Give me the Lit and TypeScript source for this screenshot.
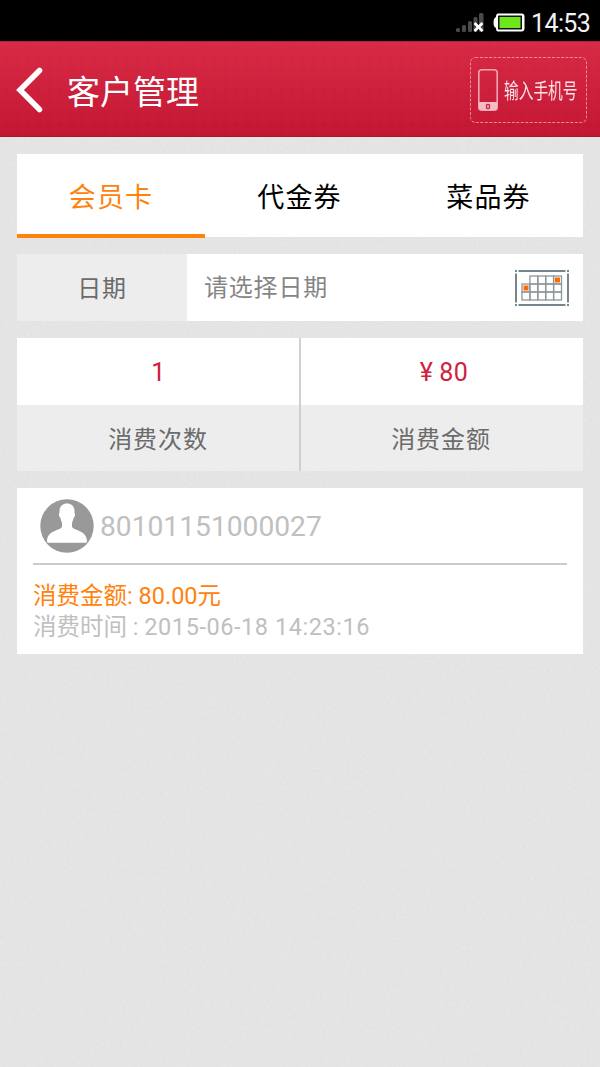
import { LitElement, html, css, svg } from "lit";
import { customElement, state } from "lit/decorators.js";
import { classMap } from "lit/directives/class-map.js";

@customElement("status-bar")
class StatusBar extends LitElement {
  static styles = css`
    :host { display: flex; height: 41px; background: #000; justify-content: flex-end; align-items: center; padding-right: 9px; box-sizing: border-box; }
    .signal { margin-right: 9px; }
    .battery { margin-right: 6px; }
    .time { font: 25px/41px Roboto, sans-serif; color: #f2f2f2; width: 60px; white-space: nowrap; letter-spacing: -0.6px; padding-top: 5px; }
    svg { display: block; margin-top: 4px; }
  `;
  render() {
    return html`
      <svg class="signal" width="28" height="21" viewBox="0 0 28 21">
        <g fill="#4a4a4a">
          <rect x="0" y="16" width="4" height="4" rx="1.5"/><rect x="6" y="13" width="4" height="7" rx="1.5"/>
          <rect x="12" y="9" width="4" height="11" rx="1.5"/><rect x="17.5" y="5" width="4" height="15" rx="1.5"/>
          <rect x="23" y="1" width="4.5" height="19" rx="1.5"/>
        </g>
        <path d="M18.500 11l8 8M26.500 11l-8 8" stroke="#fff" stroke-width="2.600"/>
      </svg>
      <svg class="battery" width="32" height="19" viewBox="0 0 32 19">
        <path d="M5 .5h23.500q3 0 3 3v12q0 3-3 3h-23.500q-2 0-2-3.500q-2.500-1-2.500-5.500t2.500-5.500q0-3.500 2-3.500z" fill="#fff"/>
        <rect x="5" y="2.500" width="24" height="14" rx=".5" fill="#111"/>
        <rect x="6.500" y="4" width="21" height="11" fill="#6ee619"/>
      </svg>
      <span class="time">14:53</span>`;
  }
}

@customElement("title-bar")
class TitleBar extends LitElement {
  static styles = css`
    :host { display: flex; height: 96px; box-sizing: border-box; align-items: center; padding: 1px 13px 0 16px;
      background: radial-gradient(circle at 50% 50%, rgba(110,0,30,.035) 0 2px, transparent 4px) 0 0/11px 11px,
        linear-gradient(#d92b46, #c31733); border-bottom: 1px solid #ae1430; border-top: 1px solid #b3203a; }
    .back { display: block; margin-right: 24px; }
    h1 { font: 33px/48px Roboto, "Noto Sans CJK SC", sans-serif; font-weight: 400; margin: 0; padding-top: 6px; color: #fff; flex: 1; }
    .phone { display: flex; align-items: center; width: 117px; height: 66px; position: relative; box-sizing: border-box; padding-left: 8px; }
    .frame { position: absolute; inset: 0; }
    .device { margin-right: 6px; }
    .label { font: 21px/30px Roboto, "Noto Sans CJK SC", sans-serif; color: #fbe3e7; white-space: nowrap; transform: scaleX(.7); transform-origin: 0 50%; width: 74px; padding-top: 2px; }
  `;
  render() {
    return html`
      <svg class="back" width="27" height="46" viewBox="0 0 27 46"><path d="M23.500 3.500L4 23l19.500 19.500" fill="none" stroke="#fff" stroke-width="5.500" stroke-linecap="round"/></svg>
      <h1>客户管理</h1>
      <div class="phone">
        <svg class="frame" width="117" height="66"><rect x=".5" y=".5" width="116" height="65" rx="5" fill="none" stroke="#ea8b9b" stroke-dasharray="3 1.500"/></svg>
        <svg class="device" width="20" height="42" viewBox="0 0 20 42">
          <rect x=".8" y=".8" width="18.400" height="40.400" rx="3" fill="none" stroke="#efa6b2" stroke-width="1.600"/>
          <path d="M1 33h18v5q0 3-3 3H4q-3 0-3-3z" fill="#f3bcc6"/>
          <rect x="8.500" y="35.500" width="3" height="4" rx="1" fill="none" stroke="#cf2440" stroke-width="1.300"/>
        </svg>
        <span class="label">输入手机号</span>
      </div>`;
  }
}

@customElement("calendar-icon")
class CalendarIcon extends LitElement {
  static styles = css`:host { display: block; } svg { display: block; }`;
  render() {
    const cells = [];
    for (let r = 0; r < 3; r++)
      for (let c = r === 0 ? 1 : 0; c < 5; c++)
        cells.push(svg`<rect x=${7 + c * 7.9} y=${6 + r * 8} width="7.9" height="8"/>`);
    return html`<svg width="54" height="36" viewBox="0 0 54 36">
      <g stroke="#77858d" stroke-width="2"><path d="M3.500 1h47M3.500 35h47M1 3.500v29M53 3.500v29"/></g>
      <g fill="#77858d"><rect width="2" height="2"/><rect x="52" width="2" height="2"/><rect y="34" width="2" height="2"/><rect x="52" y="34" width="2" height="2"/></g>
      <g fill="none" stroke="#8b979e" stroke-width="1.300">${cells}</g>
      <rect x="8.500" y="15.500" width="5" height="5" fill="#ff6a00"/><rect x="40" y="7.500" width="5" height="5" fill="#ff6a00"/>
    </svg>`;
  }
}

@customElement("app-root")
class AppRoot extends LitElement {
  @state() active = 0;
  static styles = css`
    :host { display: block; min-height: 1067px; position: relative; background: #e6e6e6; font-family: Roboto, "Noto Sans CJK SC", sans-serif; overflow: hidden; }
    .grain { position: absolute; inset: 0; width: 100%; height: 100%; opacity: .07; }
    .page { position: relative; }
    main { display: flex; flex-direction: column; gap: 17px; padding: 17px 17px 0; }
    .tabs { display: grid; grid-template-columns: 188px 1fr 1fr; height: 83px; background: #fff; }
    .tab { font-size: 27px; line-height: 88px; letter-spacing: 1.1px; text-align: center; box-sizing: border-box; height: 83.500px; color: #000; }
    .tab.on { color: #ff820e; border-bottom: 4px solid #ff820e; }
    .date { display: flex; height: 67px; background: #fff; align-items: center; font-size: 24px; letter-spacing: .8px; }
    .date-label { width: 170px; height: 67px; line-height: 70px; background: #ededed; color: #6b6b6b; text-align: center; }
    .date-value { flex: 1; padding: 0 0 4px 17px; color: #858585; }
    .date calendar-icon { margin-right: 14px; }
    .stats { display: grid; grid-template-columns: 283px 1fr; height: 133px; background: #fff; }
    .stat { text-align: center; font-size: 24px; letter-spacing: .9px; }
    .stat + .stat { position: relative; }
    .stat + .stat::before { content: ""; position: absolute; left: -1px; top: 0; bottom: 0; width: 2px; background: #d0d0d0; }
    .num { height: 67px; line-height: 69px; color: #d0213f; font-size: 25px; letter-spacing: .5px; }
    .num .yen { margin: 0 6px 0 5px; }
    .cap { height: 66px; line-height: 70px; background: #ededed; color: #6b6b6b; padding-right: 1px; }
    .record { background: #fff; height: 166px; padding: 0 16px; box-sizing: border-box; }
    .head { height: 77px; box-sizing: border-box; border-bottom: 2px solid #cacaca; display: flex; align-items: center; padding-left: 6.500px; gap: 6.500px; }
    .card-no { font-size: 28.200px; color: #c0c0c0; padding-top: 2px; }
    .line { height: 32px; line-height: 32px; font-size: 23.500px; white-space: nowrap; }
    .amount { color: #ff820e; margin-top: 15px; height: 31px; }
    .when { color: #c0c0c0; }
    .stamp { letter-spacing: .55px; }
  `;
  render() {
    return html`
      <svg class="grain"><filter id="n"><feTurbulence type="fractalNoise" baseFrequency=".3" numOctaves="2"/><feColorMatrix type="saturate" values="0"/></filter><rect width="100%" height="100%" filter="url(#n)"/></svg>
      <div class="page">
        <status-bar></status-bar>
        <title-bar></title-bar>
        <main>
          <nav class="tabs">${["会员卡", "代金券", "菜品券"].map((t, i) => html`<div class=${classMap({ tab: true, on: i === this.active })} @click=${() => (this.active = i)}>${t}</div>`)}</nav>
          <section class="date"><div class="date-label">日期</div><div class="date-value">请选择日期</div><calendar-icon></calendar-icon></section>
          <section class="stats">
            <div class="stat"><div class="num">1</div><div class="cap">消费次数</div></div>
            <div class="stat"><div class="num"><span class="yen">¥</span>80</div><div class="cap">消费金额</div></div>
          </section>
          <section class="record">
            <div class="head">
              <svg width="54" height="54" viewBox="0 0 54 54"><circle cx="27" cy="27" r="26.700" fill="#999"/>
                <path d="M27 4.500c5 0 8 3.500 7.500 9.500c1 1 .5 4-.8 4.600c-.4 2.500-1.200 4-1.700 5.400v3.500c1 4.500 14.500 3 15 14.500c0 1.500-1 1.800-2 1.800H9c-1.500 0-2-.5-2-1.800c.5-11.500 14-10 15-14.500V24c-.5-1.500-1.300-3-1.700-5.400c-1.300-.6-1.800-3.600-.8-4.600C19 8 22 4.500 27 4.500z" fill="#fff"/></svg>
              <span class="card-no">80101151000027</span>
            </div>
            <div class="line amount">消费金额: 80.00元</div>
            <div class="line when">消费时间 : <span class="stamp">2015-06-18 14:23:16</span></div>
          </section>
        </main>
      </div>`;
  }
}
